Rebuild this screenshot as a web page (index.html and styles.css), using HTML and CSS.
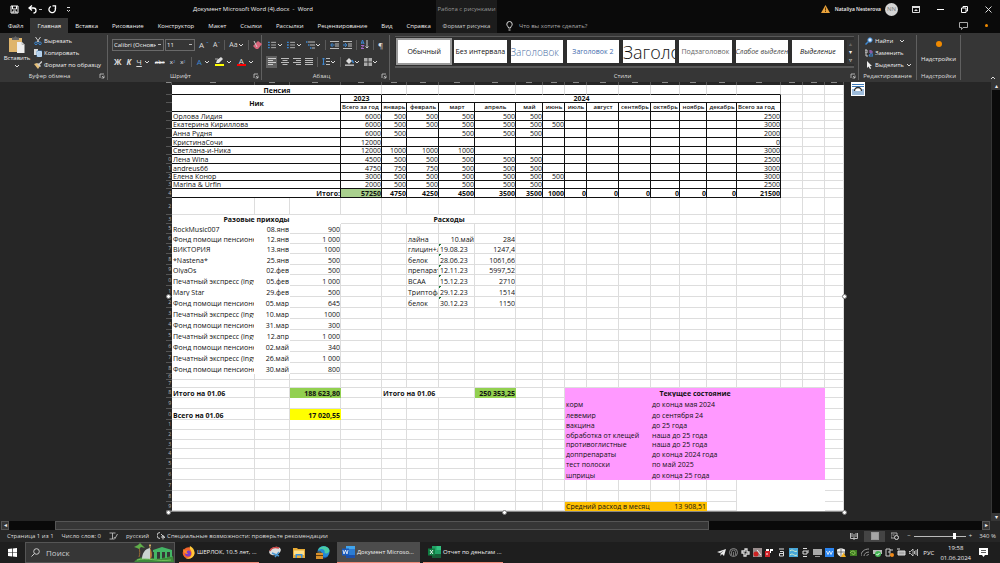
FILE: index.html
```html
<!DOCTYPE html>
<html lang="ru">
<head>
<meta charset="utf-8">
<title>Документ Microsoft Word (4).docx - Word</title>
<link rel="stylesheet" href="styles.css">
</head>
<body>
<svg class="defs" aria-hidden="true">
  <symbol id="chev" viewBox="0 0 6 6"><path d="M1 2l2 2 2-2" fill="none" stroke="#ddd"/></symbol>
  <symbol id="launch" viewBox="0 0 6 6"><path d="M1 5V1h4M3 3l2 2M5 2.500V5H2.500" fill="none" stroke="#ccc" stroke-width=".8"/></symbol>
  <symbol id="lines" viewBox="0 0 9 9"><path d="M3.500 1.500H9M3.500 4.500H9M3.500 7.500H9" stroke="#bbb"/><path d="M0 1.500h2M0 4.500h2M0 7.500h2" stroke="#3d87d0" stroke-width="1.500"/></symbol>
</svg>

<header class="titlebar">
  <div class="quick">
    <button aria-label="Сохранить"><svg width="9" height="9" viewBox="0 0 9 9"><path d="M1 1h7v7H1zM2.500 1v3h4V1M3 8V6h3v2" fill="none" stroke="#fff"/></svg></button>
    <button aria-label="Отменить"><svg width="14" height="9" viewBox="0 0 14 9"><path d="M4 .5L1 3l3 2.500M1 3h4.500a2.500 2.500 0 010 5" fill="none" stroke="#fff" stroke-width="1.300"/><path d="M11 4.500h3" stroke="#bbb"/></svg></button>
    <button aria-label="Повторить"><svg width="9" height="9" viewBox="0 0 9 9"><path d="M3 1.500A3.200 3.200 0 107 3M4.500.8H7.500V4" fill="none" stroke="#fff" stroke-width="1.300"/></svg></button>
    <button aria-label="Настройка панели"><svg width="5" height="7" viewBox="0 0 5 7"><path d="M1 1.500h3M1 4l1.500 1.500L4 4" fill="none" stroke="#ddd"/></svg></button>
  </div>
  <h1 class="doc-name">Документ Microsoft Word (4).docx&nbsp; -&nbsp; Word</h1>
  <div class="context-title">Работа с рисунками</div>
  <div class="window-side">
    <svg width="9" height="8" viewBox="0 0 9 8"><path d="M4.500 0L9 8H0z" fill="#e9a23b"/><path d="M4.500 2.500v3M4.500 6v1" stroke="#5b3b08"/></svg>
    <span class="user">Nataliya Nesterova</span>
    <span class="avatar">NN</span>
    <button aria-label="Параметры ленты"><svg width="8" height="7" viewBox="0 0 8 7"><path d="M.5.5h7v6h-7z" fill="none" stroke="#ddd"/><path d="M0 0h8v2H0zM4 3l2 2H2z" fill="#ddd"/></svg></button>
    <button aria-label="Свернуть"><svg width="7" height="7" viewBox="0 0 7 7"><path d="M0 3.500h7" stroke="#fff"/></svg></button>
    <button aria-label="Восстановить"><svg width="7" height="7" viewBox="0 0 7 7"><path d="M.5 2h4.500v4.500H.5zM2 2V.5h4.500V5H5" fill="none" stroke="#fff"/></svg></button>
    <button aria-label="Закрыть"><svg width="7" height="7" viewBox="0 0 7 7"><path d="M.5.5l6 6M6.500.5l-6 6" stroke="#ddd"/></svg></button>
  </div>
</header>

<nav class="tabs">
  <div class="main-tabs">
    <button>Файл</button><button class="active">Главная</button><button>Вставка</button><button>Рисование</button><button>Конструктор</button><button>Макет</button><button>Ссылки</button><button>Рассылки</button><button>Рецензирование</button><button>Вид</button><button>Справка</button>
  </div>
  <button class="context-tab">Формат рисунка</button>
  <div class="tell-me">
    <svg width="7" height="10" viewBox="0 0 7 10"><path d="M2.500 7C2.500 5.500.8 5 .8 3.200a2.700 2.700 0 015.400 0C6.200 5 4.500 5.500 4.500 7zM2.500 9h2" fill="none" stroke="#ddd"/></svg>
    <span>Что вы хотите сделать?</span>
  </div>
  <div class="tab-end">
    <svg width="9" height="8" viewBox="0 0 9 8"><path d="M.5.5h8v5H4L2.500 7.500v-2h-2z" fill="none" stroke="#aaa"/></svg>
    <i class="dot-small"></i>
  </div>
</nav>

<section class="ribbon">
  <div class="group clipboard">
    <div class="group-body">
      <button class="paste">
        <svg width="16" height="17" viewBox="0 0 16 17"><path d="M0 2h13v14H0z" fill="#dfb56c"/><path d="M3 4V1.500h2L6.500 0 8 1.500h2V4z" fill="#666"/><path d="M8 6h5l2.500 2.500V17H8z" fill="#eee"/><path d="M13 6v2.500h2.500" fill="none" stroke="#999" stroke-width=".6"/></svg>
        <span>Вставить</span>
        <svg width="6" height="6"><use href="#chev"/></svg>
      </button>
      <div class="stack">
        <button><svg width="8" height="8" viewBox="0 0 8 8"><path d="M1.500 0L5 5M6.500 0L3 5" stroke="#ccc"/><circle cx="2" cy="6.300" r="1.300" fill="none" stroke="#3d87d0"/><circle cx="6" cy="6.300" r="1.300" fill="none" stroke="#3d87d0"/></svg>Вырезать</button>
        <button><svg width="8" height="8" viewBox="0 0 8 8"><path d="M0 0h4v6H0z" fill="#ddd"/><path d="M3 2h5v6H3z" fill="#fff" stroke="#3d87d0" stroke-width=".7"/><path d="M4 4h3M4 6h3" stroke="#3d87d0" stroke-width=".8"/></svg>Копировать</button>
        <button><svg width="8" height="8" viewBox="0 0 8 8"><path d="M0 3l3-1 3 3-2 3z" fill="#e5c07a"/><path d="M3.500 2.500l3 3M5 3.500L8 .5" stroke="#ccc" stroke-width="1.500"/></svg>Формат по образцу</button>
      </div>
    </div>
    <footer><span>Буфер обмена</span><svg width="6" height="6"><use href="#launch"/></svg></footer>
  </div>

  <div class="group font">
    <div class="group-body rows">
      <div class="tools font-row">
        <select class="font-name" aria-label="Шрифт"><option>Calibri (Основной текст)</option></select>
        <select class="font-size" aria-label="Размер"><option>11</option></select>
        <button class="glyph">A<sup>ˆ</sup></button><button class="glyph small">A<sup>ˇ</sup></button>
        <i class="bar"></i>
        <button class="glyph case">Aa<svg width="6" height="6"><use href="#chev"/></svg></button>
        <i class="bar"></i>
        <button aria-label="Очистить формат"><svg width="9" height="9" viewBox="0 0 9 9"><path d="M0 6L5 1l4 3-4 5H3z" fill="#d9647a"/><path d="M1 1l3 6" stroke="#ccc"/></svg></button>
      </div>
      <div class="tools styles-row">
        <button class="glyph"><b>Ж</b></button><button class="glyph"><b><i>К</i></b></button>
        <button class="glyph"><u>Ч</u><svg width="6" height="6"><use href="#chev"/></svg></button>
        <button class="mini"><s>abc</s></button><button class="mini">x<sub>2</sub></button><button class="mini">x<sup>2</sup></button>
        <i class="bar"></i>
        <button class="glyph blue">A<svg width="6" height="6"><use href="#chev"/></svg></button>
        <button class="glyph" aria-label="Цвет выделения"><span class="mark yellow"><svg width="9" height="7" viewBox="0 0 9 7"><path d="M1 6l1-3 4-3 2 2-4 4z" fill="#ddd"/><path d="M0 2h3" stroke="#aaa"/></svg></span><svg width="6" height="6"><use href="#chev"/></svg></button>
        <button class="glyph"><span class="mark red">A</span><svg width="6" height="6"><use href="#chev"/></svg></button>
      </div>
    </div>
    <footer><span>Шрифт</span><svg width="6" height="6"><use href="#launch"/></svg></footer>
  </div>

  <div class="group paragraph">
    <div class="group-body rows">
      <div class="tools">
        <button aria-label="Маркеры"><svg width="8" height="8"><use href="#lines"/></svg><svg class="gap" width="6" height="6"><use href="#chev"/></svg></button>
        <button aria-label="Нумерация"><svg width="8" height="8"><use href="#lines"/></svg><svg class="gap" width="6" height="6"><use href="#chev"/></svg></button>
        <button aria-label="Многоуровневый список"><svg width="9" height="8" viewBox="0 0 9 8"><path d="M2 1h7M4 4h5M6 7h3" stroke="#bbb"/><path d="M0 1h1.500M2 4h1.500M4 7h1.500" stroke="#3d87d0" stroke-width="1.500"/></svg><svg width="6" height="6"><use href="#chev"/></svg></button>
        <i class="bar"></i>
        <button aria-label="Уменьшить отступ"><svg width="9" height="8" viewBox="0 0 9 8"><path d="M0 .5h9M5 3h4M5 5h4M0 7.500h9" stroke="#bbb"/><path d="M4.500 4H1M2.500 2L.7 4l1.800 2" fill="none" stroke="#3d87d0"/></svg></button>
        <button aria-label="Увеличить отступ"><svg width="9" height="8" viewBox="0 0 9 8"><path d="M0 .5h9M5 3h4M5 5h4M0 7.500h9" stroke="#bbb"/><path d="M0 4h3.500M2 2l1.800 2L2 6" fill="none" stroke="#3d87d0"/></svg></button>
        <i class="bar"></i>
        <button aria-label="Сортировка"><svg width="8" height="9" viewBox="0 0 8 9"><path d="M0 4L1.500 0 3 4M.5 3h2" fill="none" stroke="#3d87d0"/><path d="M0 5.500h3L0 8.500h3" fill="none" stroke="#a468c8"/><path d="M6 0v8M4.500 6.500L6 8l1.500-1.500" fill="none" stroke="#ccc"/></svg></button>
        <i class="bar"></i>
        <button class="glyph">¶</button>
      </div>
      <div class="tools align-row">
        <button class="on" aria-label="По левому краю"><svg width="8" height="8" viewBox="0 0 8 8"><path d="M0 .5h8M0 2.500h5M0 4.500h8M0 6.500h5" stroke="#ccc"/></svg></button>
        <button aria-label="По центру"><svg width="8" height="8" viewBox="0 0 8 8"><path d="M0 .5h8M1.500 2.500h5M0 4.500h8M1.500 6.500h5" stroke="#bbb"/></svg></button>
        <button aria-label="По правому краю"><svg width="8" height="8" viewBox="0 0 8 8"><path d="M0 .5h8M3 2.500h5M0 4.500h8M3 6.500h5" stroke="#bbb"/></svg></button>
        <button aria-label="По ширине"><svg width="8" height="8" viewBox="0 0 8 8"><path d="M0 .5h8M0 2.500h8M0 4.500h8M0 6.500h8" stroke="#bbb"/></svg></button>
        <i class="bar"></i>
        <button aria-label="Интервал"><svg width="8" height="9" viewBox="0 0 8 9"><path d="M4 1.500h4M4 4.500h4M4 7.500h4" stroke="#bbb"/><path d="M1.500 1v7M0 2.500L1.500 1 3 2.500M0 6.500L1.500 8 3 6.500" fill="none" stroke="#3d87d0"/></svg><svg width="6" height="6"><use href="#chev"/></svg></button>
        <i class="bar"></i>
        <button aria-label="Заливка"><svg width="9" height="9" viewBox="0 0 9 9"><path d="M1 4l3-3 3 3-3 3z" fill="#ddd"/><path d="M7 3l1.500 3" stroke="#3d87d0" stroke-width="1.500"/><path d="M0 8.200h9" stroke="#bbb" stroke-width="1.500"/></svg><svg width="6" height="6"><use href="#chev"/></svg></button>
        <button aria-label="Границы"><svg width="8" height="8" viewBox="0 0 8 8"><path d="M0 0h3.500v3.500H0zM4.500 0H8v3.500H4.500zM0 4.500h3.500V8H0zM4.500 4.500H8V8H4.500z" fill="#aaa"/></svg><svg width="6" height="6"><use href="#chev"/></svg></button>
      </div>
    </div>
    <footer><span>Абзац</span><svg width="6" height="6"><use href="#launch"/></svg></footer>
  </div>

  <div class="group styles">
    <div class="gallery">
      <button class="selected">Обычный</button><button>Без интервала</button><button class="h1">Заголовок</button><button class="h2">Заголовок 2</button><button class="title">Заголовок</button><button class="subtitle">Подзаголовок</button><button class="subtle">Слабое выделение</button><button class="em">Выделение</button>
      <div class="gallery-nav"><span class="off">▴</span><span>▾</span><span>▿</span></div>
    </div>
    <footer><span>Стили</span><svg width="6" height="6"><use href="#launch"/></svg></footer>
  </div>

  <div class="group editing">
    <div class="group-body">
      <div class="stack">
        <button><svg width="8" height="8" viewBox="0 0 8 8"><circle cx="5" cy="3" r="2.200" fill="#dceafa" stroke="#3d87d0"/><path d="M3.500 4.500L.5 7.500" stroke="#3d87d0" stroke-width="1.500"/></svg>Найти<svg class="far" width="6" height="6"><use href="#chev"/></svg></button>
        <button><svg width="8" height="8" viewBox="0 0 8 8"><path d="M0 4V1h2v3zM1 5v2h2" fill="none" stroke="#ccc"/><path d="M5 1v3h2V2H5" fill="none" stroke="#a468c8"/><path d="M4 7h4V5H5z" fill="none" stroke="#3d87d0"/></svg>Заменить</button>
        <button><svg width="8" height="8" viewBox="0 0 8 8"><path d="M2 0v7l1.500-1.500L5 8l1-.5L5 5h2z" fill="#eee"/></svg>Выделить<svg width="6" height="6"><use href="#chev"/></svg></button>
      </div>
    </div>
    <footer><span>Редактирование</span></footer>
  </div>

  <div class="group addins">
    <button class="addin"><i class="dot"></i><span>Надстройки</span></button>
    <footer><span>Надстройки</span></footer>
  </div>
  <button class="collapse" aria-label="Свернуть ленту"><svg width="6" height="6" viewBox="0 0 6 6"><path d="M1 4l2-2 2 2" fill="none" stroke="#ddd"/></svg></button>
</section>

<main class="workspace">
  <div class="canvas">
    <div class="picture">
      <table class="sheet" id="sheet"></table>
      <i class="handle left middle"></i><i class="handle right middle"></i>
      <i class="handle left bottom"></i><i class="handle center bottom"></i><i class="handle right bottom"></i>
      <button class="layout-options" aria-label="Параметры разметки"><svg width="12" height="12" viewBox="0 0 12 12"><path d="M0 1.500h12M0 3.500h12M0 9h12M0 11h12" stroke="#3b78b8"/><path d="M2.500 8a3.500 3.500 0 017 0" fill="#fff" stroke="#333" stroke-width="1.300"/><path d="M0 7h2M10 7h2" stroke="#3b78b8"/></svg></button>
    </div>
  </div>
  <div class="vscroll"><span>▴</span><i></i><span>▾</span></div>
</main>

<div class="hscroll"><span>◂</span><i></i><span class="end">▸</span></div>

<footer class="status">
  <span>Страница 1 из 1</span><span>Число слов: 0</span>
  <svg width="9" height="8" viewBox="0 0 9 8"><path d="M.5 1h3v6h-3M3.500 1h3M3.500 7h2M5 5l1 1.500L8.500 2" fill="none" stroke="#ccc" stroke-width=".8"/></svg>
  <span>русский</span>
  <span class="access"><svg width="9" height="8" viewBox="0 0 9 8"><path d="M3 .5a3 3 0 000 6M4 2l4 4M6 3v4.500M4 5h4" fill="none" stroke="#ccc"/></svg><span>Специальные возможности: проверьте рекомендации</span></span>
  <div class="views">
    <button aria-label="Чтение"><svg width="8" height="7" viewBox="0 0 8 7"><path d="M4 1v6M.5 0v5.500H4M7.500 0v5.500H4M2 0v4M6 0v4" fill="none" stroke="#bbb"/></svg></button>
    <button class="on" aria-label="Разметка"><svg width="8" height="8" viewBox="0 0 8 8"><path d="M0 0h8v8H0z" fill="#999"/><path d="M1 2h6M1 4h6M1 6h6" stroke="#ccc" stroke-width=".5"/></svg></button>
    <button aria-label="Веб"><svg width="8" height="8" viewBox="0 0 8 8"><path d="M0 1h6v2M0 1v5h3M1.500 3h2" fill="none" stroke="#aaa"/><circle cx="5.500" cy="5.500" r="2" fill="none" stroke="#ddd"/></svg></button>
  </div>
  <div class="zoom"><span>−</span><input type="range" aria-label="Масштаб" min="0" max="100" value="80"><span>+</span><span class="pct">340 %</span></div>
</footer>

<div class="taskbar">
  <button class="start" aria-label="Пуск"><svg width="9" height="9" viewBox="0 0 9 9"><path d="M0 1l4-.5v3.700H0zM4.700.4L9 0v4.200H4.700zM0 4.800h4v3.700L0 8zM4.700 4.800H9V9l-4.300-.5z" fill="#fff"/></svg></button>
  <label class="search">
    <svg width="9" height="9" viewBox="0 0 9 9"><circle cx="5.500" cy="3.500" r="2.800" fill="none" stroke="#ccc"/><path d="M3.500 5.500L.5 8.500" stroke="#ccc"/></svg>
    <input type="text" placeholder="Поиск" aria-label="Поиск">
    <svg width="40" height="19" viewBox="0 0 40 19"><path d="M0 19c4-5 10-6 18-4 8 2 12-1 21-2l1 6z" fill="#3d8a3a"/><path d="M8 16c0-6 3-10 8-11v11z" fill="#c9d3d0"/><path d="M16 5v11c3-1 2-8 0-11" fill="#b97b3e"/><path d="M16 1v4M15 2.500h2" stroke="#cfa860"/><path d="M5 4c1 4 1 7 0 10" stroke="#9a6b35" fill="none"/><path d="M0 4l4-2 2-2 3 3 2 2-4-1-2 2-2-1z" fill="#5fae4a"/><path d="M19 7l9-3 10 3v2H19z" fill="#44b565"/><path d="M20 9h3v7h-3zM26 9h2v7h-2zM31 9h2v6h-2zM36 9h2v5h-2z" fill="#44b565"/><path d="M3 17c10-3 20 2 34 0" stroke="#74c25d" fill="none"/></svg>
  </label>
  <button class="task firefox"><svg width="13" height="13" viewBox="0 0 13 13"><circle cx="6.500" cy="7" r="5.800" fill="#f4642c"/><path d="M8 0c3 2 5 4 4.500 8-1 4-6 6-9 4 4 0 7-2 6-6C9 4 7 3 8 0z" fill="#ffc83a"/><circle cx="6" cy="7.500" r="3" fill="#7d3cc7"/><path d="M1 3l2 1.500L6 4 4.500 6 6 8c-3 0-5-2-5-5z" fill="#ff8c2a"/></svg><span>ШЕРЛОК, 10.5 лет, ...</span></button>
  <button class="pin" aria-label="Ножницы"><svg width="14" height="13" viewBox="0 0 14 13"><ellipse cx="7" cy="5" rx="6" ry="4" fill="#ddd" transform="rotate(-20 7 5)"/><path d="M2 5c1-3 5-4 9-3" stroke="#c44" fill="none" stroke-width="1.500"/><path d="M4 7l7 3M11 6L7 11" stroke="#4a96d0" stroke-width="1.500"/></svg></button>
  <button class="pin" aria-label="Проводник"><svg width="12" height="10" viewBox="0 0 12 10"><path d="M0 0h4l1 1h7v9H0z" fill="#e8ab35"/><path d="M1 2.500h10V7H1z" fill="#ffe08a"/><path d="M2.500 10V6h7v4H8V7.500H4V10z" fill="#3b90dc"/></svg></button>
  <button class="pin edge" aria-label="Edge"><svg width="14" height="13" viewBox="0 0 14 13"><circle cx="7.500" cy="6" r="6" fill="#2587d3"/><path d="M2 4c2-5 10-5 11.500 0 .5 3-3 4-5 3 1-2-1-4-3-4z" fill="#48cba8"/><path d="M4 8c1 3 5 4 8 2-2 3-6 3-8 1z" fill="#134f9c"/><path d="M0 7h7v6H0z" fill="#d7902b"/><path d="M2 7V6h3v1M0 9.500h7" stroke="#633d0b" fill="none"/></svg></button>
  <button class="task active"><svg width="13" height="12" viewBox="0 0 13 12"><path d="M4 0h9v12H4z" fill="#2b7cd3"/><path d="M4 0h9v3H4z" fill="#41a5ee"/><path d="M4 9h9v3H4z" fill="#1c4fa8"/><path d="M0 2.500h7v7H0z" fill="#185abd"/><path d="M1 4l1 4 1.500-4L5 8l1-4" stroke="#fff" fill="none" stroke-width=".8"/></svg><span>Документ Microso...</span></button>
  <button class="task"><svg width="13" height="12" viewBox="0 0 13 12"><path d="M4 0h9v12H4z" fill="#21a366"/><path d="M8.500 0H13v4H8.500z" fill="#33c481"/><path d="M4 8h9v4H4z" fill="#185c37"/><path d="M0 2.500h7v7H0z" fill="#107c41"/><path d="M2 4l3 4M5 4L2 8" stroke="#fff" stroke-width=".9"/></svg><span>Отчет по деньгам ...</span></button>
  <div class="tray">
    <svg viewBox="0 0 9 9"><path d="M0 4l9-3-2 7-2-2-1.500 2V5.500L7 2.500 3 5z" fill="#eee"/></svg>
    <svg viewBox="0 0 9 9"><circle cx="4.500" cy="4.500" r="4" fill="none" stroke="#888"/><path d="M2.500 7V4a2 2 0 014 0v3M4.500 4v4" fill="none" stroke="#888" stroke-width=".8"/></svg>
    <svg viewBox="0 0 9 9"><path d="M1 3h3V1h2v3h2v2H5v2H3V5H1z" fill="none" stroke="#ddd" stroke-width="1.300"/></svg>
    <svg viewBox="0 0 9 9"><path d="M0 0h9v9H0z" fill="#9a8d8d"/><circle cx="3" cy="6" r="2.500" fill="#c22"/><path d="M4 2l4 5" stroke="#eee"/></svg>
    <svg viewBox="0 0 9 9"><path d="M1 1h3v2H1zM5 1h3v2H5zM3 3h3v2H3z" fill="#fff"/><path d="M0 3h5v6H0z" fill="#d2232a"/><path d="M2 5v2" stroke="#fff"/></svg>
    <svg viewBox="0 0 9 9"><path d="M2 1h5M3 3.500h3.500V8H2.500V5.500h4" fill="none" stroke="#ddd"/></svg>
    <svg viewBox="0 0 9 9"><path d="M0 0h9v9H0z" fill="#48a7d9"/><path d="M1 3c3-3 4 2 7 0M1 7c3-3 4 2 7 0" fill="none" stroke="#d9eecb"/></svg>
    <svg viewBox="0 0 9 9"><path d="M2 .5h4M2 8.500h4M2 3h4v3H2zM7 2v3" fill="none" stroke="#ddd"/></svg>
    <svg viewBox="0 0 9 9"><path d="M0 1h9v6H0z" fill="#aaa"/><path d="M2 8.500h5" stroke="#999"/></svg>
    <svg viewBox="0 0 9 9"><path d="M0 0h9v9H0z" fill="#2a84f0"/><path d="M1.500 3l1.500 3.500L4.500 3 6 6.500 7.500 3" fill="none" stroke="#fff" stroke-width=".8"/></svg>
    <svg viewBox="0 0 9 9"><path d="M4 0l4 1.500V4c0 2-2 4-4 5-2-1-4-3-4-5V1.500z" fill="#eee"/><path d="M4 0v8M0 4h8" stroke="#333" stroke-width=".6"/><path d="M6.500 4.500L9 9H4z" fill="#f5b120"/></svg>
    <svg viewBox="0 0 9 9"><path d="M1 2h7v6H1z" fill="#3f7d22"/><path d="M1 5c2-3 5-2 5 0S3 7 3 5" fill="none" stroke="#a7d86a" stroke-width=".8"/></svg>
    <svg viewBox="0 0 9 9"><path d="M0 8c0-4 3-7 8-7M3 8c0-2 2-4 5-4M5.500 8C6 7 7 6.500 8 6.500" fill="none" stroke="#999"/></svg>
    <svg viewBox="0 0 9 9"><path d="M0 2h9v4H0z" fill="#bbb"/><circle cx="5" cy="6" r="3" fill="#43b553"/><path d="M3.500 6l1 1.200L6.500 5" fill="none" stroke="#fff"/></svg>
    <svg viewBox="0 0 9 9"><path d="M1 1h4v7H1zM5 2h3M3 4h2" fill="none" stroke="#ccc"/><circle cx="7" cy="7" r="2" fill="#f08a18"/></svg>
    <svg viewBox="0 0 9 9"><path d="M1 3h7v4H1zM0 1h3" fill="#aaa" stroke="#ddd"/></svg>
    <svg viewBox="0 0 9 9"><path d="M0 3.500h1.500L4 1v7L1.500 5.500H0zM5.500 3v3M7 2v5M8.500 1v7" fill="none" stroke="#ddd" stroke-width=".8"/></svg>
    <span class="lang">РУС</span>
    <span class="clock">19:58<br>01.06.2024</span>
    <svg class="note" viewBox="0 0 9 9"><path d="M0 0h9v7H6L4.500 9 3 7H0z" fill="#fff"/><path d="M2 2.500h5M2 4.500h5" stroke="#333" stroke-width=".8"/></svg>
  </div>
</div>
<script src="sheet.js"></script>
</body>
</html>
```
FILE: styles.css
```css
* { box-sizing: border-box; }
body {
  margin: 0; height: 100vh; display: flex; flex-direction: column; overflow: hidden;
  background: #262626; color: #f0f0f0;
  font: 6px/8px "Open Sans", "Noto Sans", sans-serif;
}
button, input, select { font: inherit; color: inherit; background: none; border: 0; padding: 0; margin: 0; }
button { display: flex; align-items: center; justify-content: center; white-space: nowrap; }
svg { display: block; flex: none; }
.defs { position: absolute; width: 0; height: 0; }

/* title bar and tabs */
.titlebar, .tabs { display: grid; background: #0a0a0a; flex: none; }
.titlebar { grid-template-columns: 70px 366px 61px 1fr; height: 18px; align-items: center; }
.quick { display: flex; gap: 9px; padding-left: 10px; }
.quick button:nth-child(3) { margin-left: -3px; }
.doc-name { margin: 0; font-size: 6px; font-weight: 400; text-align: center; }
.context-title { background: #1c1c1c; color: #999; text-align: center; line-height: 18px; }
.window-side { display: flex; align-items: center; justify-content: flex-end; gap: 17px; padding-right: 8px; }
.window-side > :first-child { margin-right: -12px; }
.user { margin-right: -13px; font-weight: 600; font-size: 5px; }
.avatar { width: 13px; height: 13px; border-radius: 50%; background: #d4d4d4; color: #777; text-align: center; line-height: 13px; margin-right: -3px; }
.tabs { grid-template-columns: 436px 61px 1fr auto; height: 15px; }
.main-tabs { display: flex; padding-left: 1px; }
.main-tabs button { padding: 0 7px; }
.main-tabs .active { background: #363636; }
.context-tab { background: #1c1c1c; color: #ccc; }
.tell-me { display: flex; align-items: center; gap: 6px; padding-left: 9px; color: #aaa; }
.tab-end { display: flex; align-items: center; gap: 17px; padding-right: 12px; }
.dot-small { width: 3px; height: 3px; border-radius: 50%; background: #f08a00; }

/* ribbon */
.ribbon { display: flex; height: 49px; flex: none; background: #363636; padding-top: 2px; }
.group { display: flex; flex-direction: column; justify-content: space-between; border-right: 1px solid #606060; margin-bottom: 2px; flex: none; }
.clipboard { width: 108px; }
.font { width: 154px; }
.paragraph { width: 128px; }
.styles { flex: 1; min-width: 0; padding-left: 5px; }
.editing { width: 58px; }
.addins { width: 44px; }
.group footer { display: flex; align-items: center; height: 8px; color: #ddd; }
.group footer span { flex: 1; text-align: center; }
.group footer svg { margin-right: 2px; }
.group-body { display: flex; }
.paste { flex-direction: column; width: 34px; gap: 1px; padding-top: 1px; }
.stack { display: flex; flex-direction: column; gap: 4px; padding-top: 2px; }
.stack button { justify-content: flex-start; gap: 2px; height: 8px; }
.editing .stack { padding-left: 6px; }
.far { margin-left: 4px; }
.rows { flex-direction: column; gap: 4px; padding-top: 3px; }
.tools { display: flex; align-items: center; height: 13px; padding-left: 4px; gap: 5px; }
.tools > * { flex: none; }
.tools.font-row { gap: 4px; }
.font-name, .font-size { border: 1px solid #6a6a6a; height: 12px; font-size: 6px; padding: 0 7px 0 1px; appearance: none; background: #363636 linear-gradient(#bbb, #bbb) no-repeat right 2px center / 3px 1px; }
.font-name { width: 52px; margin-right: -3px; }
.font-size { width: 30px; }
.bar { width: 1px; height: 10px; background: #5a5a5a; }
.glyph { font-size: 8px; color: #ddd; gap: 2px; }
.glyph sup { font-size: 7px; color: #3d87d0; line-height: 4px; }
.glyph.small { font-size: 7px; gap: 0; }
.glyph.case { font-size: 7px; gap: 0; }
.mini { font-size: 6px; }
.mini sub, .mini sup { font-size: 4px; line-height: 3px; color: #5b9fe0; }
.tools.styles-row { gap: 5px; padding-left: 6px; }
.blue { color: #3d87d0; }
.mark { width: 9px; line-height: 7px; text-align: center; border-bottom: 2px solid; }
.yellow { border-color: #ff0; }
.red { border-color: #f00; }
.paragraph .tools { gap: 4px; padding-left: 6px; }
.gap { margin-left: 1px; }
.paragraph .align-row { padding-left: 4px; }
.align-row .on { width: 11px; height: 12px; background: #606060; }

.gallery { display: flex; gap: 4px; height: 32px; margin-top: 1px; padding: 3px 0 3px 3px; margin-right: 4px; background: #2e2e2e; border: 1px solid #585858; border-width: 1px 0 2px 0; }
.gallery > button { flex: 1 1 0; min-width: 0; overflow: hidden; background: #fff; color: #111; font-size: 7px; }
.gallery .selected { outline: 2px solid #999; }
.gallery .h1 { color: #4a6fa5; font-size: 10px; justify-content: flex-start; font-weight: 300; }
.gallery .h2 { color: #3f6cae; }
.gallery .title { font-size: 18px; justify-content: flex-start; font-weight: 300; }
.gallery .subtitle { color: #666; }
.gallery .subtle { color: #444; font-style: italic; justify-content: flex-start; }
.gallery .em { font-style: italic; }
.gallery-nav { width: 7px; margin-left: -1px; display: flex; flex-direction: column; justify-content: space-between; text-align: center; font-size: 6px; line-height: 8px; }
.gallery-nav span { background: #363636; }
.gallery-nav .off { color: #666; }
.addin { flex-direction: column; gap: 8px; padding-top: 6px; }
.dot { width: 6px; height: 6px; border-radius: 50%; background: #f08a00; }
.collapse { width: 39px; align-items: flex-end; justify-content: flex-end; padding: 0 4px 1px 0; }

/* document */
.workspace { flex: 1; min-height: 0; display: flex; }
.canvas { flex: 1; padding-left: 166px; overflow: hidden; }
.picture { position: relative; width: max-content; }
.sheet { table-layout: fixed; width: 678px; border-collapse: separate; border-spacing: 0; background: #fff; color: #111; font-size: 7px; line-height: 7px; border-bottom: 1px solid #888; }
.sheet td, .sheet th { padding: 0 0 0 1px; border-right: 1px solid #ddd; border-bottom: 1px solid #ddd; overflow: hidden; white-space: nowrap; vertical-align: bottom; font-weight: 400; text-align: left; }
.sheet .letters td { height: 3px; line-height: 0; border-bottom: 0; border-right-color: #555; background: #262626 linear-gradient(#888, #888) no-repeat center top / 6px 1px; }
.sheet th.num { background: #262626; color: #bbb; border-color: #555; border-right: 0; font-size: 5px; line-height: 5px; padding: 0 1px 0 0; text-align: right; vertical-align: middle; }
.sheet .k { border-color: #111; }
.sheet .kb { border-bottom-color: #111; }
.sheet .r { text-align: right; }
.sheet .c { text-align: center; }
.sheet .m { vertical-align: middle; }
.sheet .b { font-weight: 700; }
.sheet .s { font-weight: 600; font-size: 6px; }
.sheet .n { border-color: transparent; }
.sheet .green { background: #a9d08e; }
.sheet .lime { background: #92d050; border-color: #92d050; }
.sheet .yel { background: #ff0; border-color: #ff0; }
.sheet .pink { background: #f9f; border-color: #f9f; }
.sheet .gold { background: #ffc000; border-color: #ffc000; }
.sheet .flag { background: linear-gradient(135deg, #1d7a35 2px, transparent 2px); }
.handle { position: absolute; width: 5px; height: 5px; border-radius: 50%; background: #fff; border: 1px solid #777; }
.handle.left { left: 0; }
.handle.right { right: -3px; }
.handle.center { left: 50%; margin-left: -3px; }
.handle.middle { top: 50%; margin-top: -3px; }
.handle.bottom { bottom: -3px; }
.layout-options { position: absolute; left: 100%; top: 0; margin-left: 7px; width: 14px; height: 14px; background: #fff; }
.vscroll { width: 9px; flex: none; display: flex; flex-direction: column; background: #0a0a0a; border-left: 1px solid #363636; text-align: center; }
.vscroll span { background: #363636; }
.vscroll i { flex: 1; }
.hscroll { display: flex; flex: none; height: 9px; margin: 0 10px 0 1px; background: #0a0a0a; }
.hscroll span { width: 8px; border: 1px solid #555; background: #363636; text-align: center; line-height: 7px; }
.hscroll i { flex: 0 1 654px; margin: 0 auto 0 46px; background: #363636; border: 1px solid #555; }

/* status bar */
.status { display: flex; align-items: center; flex: none; height: 12px; padding: 0 4px 0 7px; gap: 8px; color: #ddd; }
.access { display: flex; align-items: center; gap: 1px; }
.views { display: flex; gap: 6px; margin-left: auto; align-items: center; }
.views .on { width: 21px; height: 11px; background: #444; }
.zoom { display: flex; align-items: center; gap: 3px; }
.zoom input { appearance: none; width: 52px; height: 8px; background: linear-gradient(#bbb, #bbb) no-repeat center / 100% 1px; }
.zoom input::-webkit-slider-thumb { appearance: none; width: 3px; height: 6px; background: #fff; }
.pct { margin-left: 4px; }

/* taskbar */
.taskbar { display: flex; align-items: stretch; flex: none; height: 21px; background: #1e1e1e; }
.start { width: 25px; }
.search { display: flex; align-items: center; width: 150px; gap: 6px; padding-left: 5px; background: #363636; border: 1px solid #555; }
.search input { flex: 1; min-width: 0; font-size: 8px; }
.search input::placeholder { color: #ccc; }
.task { gap: 2px; padding: 0 5px; width: 80px; justify-content: flex-start; border-bottom: 1px solid #f08a78; }
.task.active { width: 83px; background: #4c4c4c; margin-right: 3px; }
.firefox { margin: 0 4px; padding: 0 3px; }
.pin { width: 24px; }
.pin.edge { margin-right: 2px; }
.tray { display: flex; align-items: center; margin-left: auto; gap: 3px; padding-right: 12px; }
.tray svg { width: 9px; height: 9px; }
.lang { margin-left: 2px; }
.clock { text-align: center; line-height: 10px; margin-left: 3px; }
.tray .note { margin-left: 5px; }
```
FILE: sheet.js
```js
const table = document.getElementById("sheet");
const widths = [6, 83, 35, 51, 41, 25, 32, 36, 41, 27, 22, 22, 32, 32, 29, 27, 30, 44, 22, 22, 19];
const COLS = "ABCDEFGHIJKLMNOPQRST";

const group = document.createElement("colgroup");
widths.forEach(w => {
  const col = document.createElement("col");
  col.style.width = w + "px";
  group.append(col);
});
table.append(group);

/* cells: { column: [text, classes, colspan, rowspan] } */
function addRow(height, num, cells, skip = "") {
  const tr = table.insertRow();
  const th = document.createElement("th");
  th.className = "num";
  th.textContent = num;
  th.style.height = height + "px";
  tr.append(th);
  for (let i = 0; i < COLS.length; i++) {
    if (skip.includes(COLS[i])) continue;
    const [text, cls, span, rows] = cells[COLS[i]] || ["", "", 1, 1];
    const td = tr.insertCell();
    td.textContent = text;
    if (cls) td.className = cls;
    if (span > 1) { td.colSpan = span; i += span - 1; }
    if (rows > 1) td.rowSpan = rows;
  }
}

const letters = table.insertRow();
letters.className = "letters";
widths.forEach(() => letters.insertCell());

addRow(10, "", { A: ["Пенсия", "c b kb", 4], ...Object.fromEntries([..."EFGHIJKLMNOPQ"].map(c => [c, ["", "kb"]])) });
addRow(8, "", { A: ["Ник", "c b k m", 3, 2], D: ["2023", "c b k"], E: ["2024", "c b k", 13] });
const heads = { D: ["Всего за год", "s k"], Q: ["Всего за год", "s k"] };
["январь", "февраль", "март", "апрель", "май", "июнь", "июль", "август", "сентябрь", "октябрь", "ноябрь", "декабрь"]
  .forEach((m, i) => { heads[COLS[i + 4]] = [m, "c s k"]; });
addRow(9, "", heads, "ABC");

const members = [
  [9, "", "Орлова Лидия", 6000, [500, 500, 500, 500, 500], 2500],
  [8, "", "Екатерина Кириллова", 6000, [500, 500, 500, 500, 500, 500], 3000],
  [9, "", "Анна Рудня", 6000, [500, "", 500, 500, 500], 2000],
  [9, "", "КристинаСочи", 12000, [], 0],
  [8, "", "Светлана-и-Ника", 12000, [1000, 1000, 1000], 3000],
  [9, "0", "Лена Wina", 4500, [500, 500, 500, 500, 500], 2500],
  [9, "1", "andreus66", 4750, [750, 750, 500, 500, 500], 3000],
  [8, "2", "Елена Конор", 3000, [500, 500, 500, 500, 500, 500], 3000],
  [8, "3", "Marina & Urfin", 2000, [500, 500, 500, 500, 500], 2500],
  [9, "4", "Итого:", 57250, [4750, 4250, 4500, 3500, 3500, 1000, 0, 0, 0, 0, 0, 0], 21500]
];
members.forEach(([h, num, name, prev, months, total]) => {
  const last = name === "Итого:";
  const bold = last ? " b" : "";
  const cells = {
    A: [name, "k" + (last ? " r b" : ""), 3],
    D: [prev, "k r" + bold + (last ? " green" : "")],
    Q: [total, "k r" + bold]
  };
  for (let i = 0; i < 12; i++) cells[COLS[i + 4]] = [months[i] ?? "", "k r" + bold];
  addRow(h, num, cells);
});
addRow(17, "2", {});
addRow(9, "3", { A: ["Разовые приходы", "c b n", 3], E: ["Расходы", "c b", 4] });

const income = [
  [10, "5", "RockMusic007", "08.янв", "900"],
  [10, "6", "Фонд помощи пенсионер", "12.янв", "1 000", "лайна", "10.май", "284"],
  [10, "7", "ВИКТОРИЯ", "13.янв", "1000", "глицин+л", "19.08.23", "1247,4"],
  [11, "8", "*Nastena*", "25.янв", "500", "белок", "28.06.23", "1061,66"],
  [10, "9", "OlyaOs", "02.фев", "500", "препарат", "12.11.23", "5997,52"],
  [11, "0", "Печатный экспресс (ingv", "05.фев", "1 000", "BCAA", "15.12.23", "2710"],
  [11, "1", "Mary Star", "29.фев", "500", "Триптофа", "29.12.23", "1514"],
  [11, "2", "Фонд помощи пенсионер", "05.мар", "645", "белок", "30.12.23", "1150"],
  [11, "3", "Печатный экспресс (ingv", "10.мар", "1000"],
  [11, "4", "Фонд помощи пенсионер", "31.мар", "300"],
  [11, "5", "Печатный экспресс (ingv", "12.апр", "1 000"],
  [11, "6", "Фонд помощи пенсионер", "02.май", "340"],
  [11, "7", "Печатный экспресс (ingv", "26.май", "1 000"],
  [11, "8", "Фонд помощи пенсионер", "30.май", "800"]
];
income.forEach(([h, num, name, date, sum, item, when, cost]) => {
  const cells = { A: [name, "n"], B: [date, "n r"], C: [sum, "r"] };
  if (item) {
    cells.F = [item, ""];
    cells.G = [when, when === "10.май" ? "r" : "flag"];
    cells.H = [cost, "r"];
  }
  addRow(h, num, cells);
});
addRow(6, "6", {});
addRow(8, "7", {});

const stock = (name, state) => ({ K: [name, "pink", 3], N: [state, "pink", 6] });
addRow(10, "8", {
  A: ["Итого на 01.06", "b"], C: ["188 623,80", "r b lime"],
  E: ["Итого на 01.06", "b", 3], H: ["250 353,25", "r b lime"],
  K: ["Текущее состояние", "c b pink", 9]
});
addRow(11, "9", stock("корм", "до конца мая 2024"));
addRow(11, "0", { A: ["Всего на 01.06", "b"], C: ["17 020,55", "r b yel"], ...stock("левемир", "до сентября 24") });
addRow(10, "1", stock("вакцина", "до 25 года"));
addRow(10, "2", stock("обработка от клещей", "наша до 25 года"));
addRow(9, "3", stock("противоглистные", "наша до 25 года"));
addRow(10, "4", stock("доппрепараты", "до конца 2024 года"));
addRow(10, "5", stock("тест полоски", "по май 2025"));
addRow(11, "6", stock("шприцы", "до конца 25 года"));
const blank = { Q: ["", "n", 3] };
addRow(11, "7", blank);
addRow(11, "8", blank);
addRow(9, "9", { K: ["Средний расход в месяц", "gold", 3], N: ["13 908,51", "r gold", 2], ...blank });
```
